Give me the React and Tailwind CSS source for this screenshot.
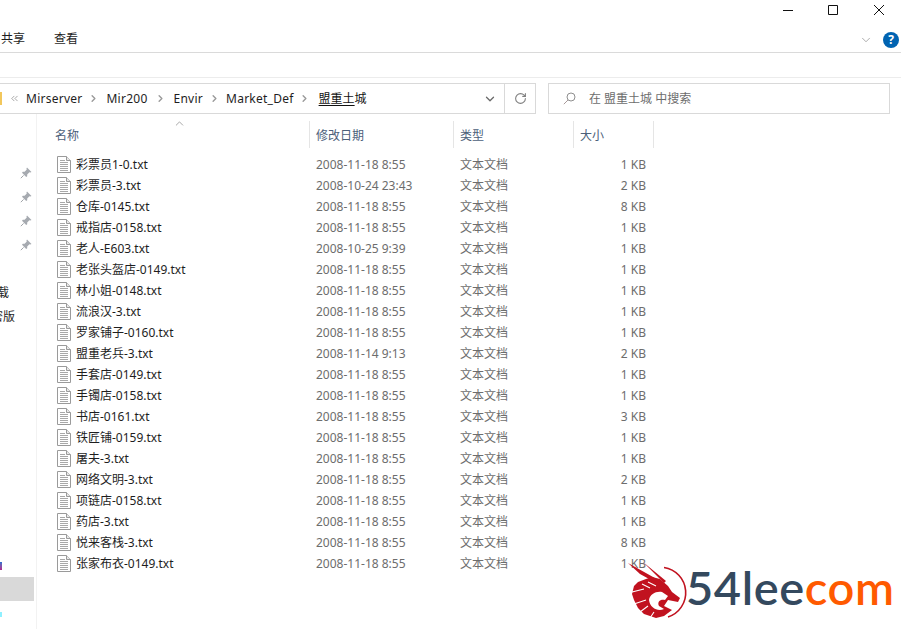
import { ChevronDown, ChevronUp, ChevronRight, ChevronsLeft, RotateCw } from 'lucide-react';

const files = [
  ['彩票员1-0.txt', '2008-11-18 8:55', '1 KB'],
  ['彩票员-3.txt', '2008-10-24 23:43', '2 KB'],
  ['仓库-0145.txt', '2008-11-18 8:55', '8 KB'],
  ['戒指店-0158.txt', '2008-11-18 8:55', '1 KB'],
  ['老人-E603.txt', '2008-10-25 9:39', '1 KB'],
  ['老张头盔店-0149.txt', '2008-11-18 8:55', '1 KB'],
  ['林小姐-0148.txt', '2008-11-18 8:55', '1 KB'],
  ['流浪汉-3.txt', '2008-11-18 8:55', '1 KB'],
  ['罗家铺子-0160.txt', '2008-11-18 8:55', '1 KB'],
  ['盟重老兵-3.txt', '2008-11-14 9:13', '2 KB'],
  ['手套店-0149.txt', '2008-11-18 8:55', '1 KB'],
  ['手镯店-0158.txt', '2008-11-18 8:55', '1 KB'],
  ['书店-0161.txt', '2008-11-18 8:55', '3 KB'],
  ['铁匠铺-0159.txt', '2008-11-18 8:55', '1 KB'],
  ['屠夫-3.txt', '2008-11-18 8:55', '1 KB'],
  ['网络文明-3.txt', '2008-11-18 8:55', '2 KB'],
  ['项链店-0158.txt', '2008-11-18 8:55', '1 KB'],
  ['药店-3.txt', '2008-11-18 8:55', '1 KB'],
  ['悦来客栈-3.txt', '2008-11-18 8:55', '8 KB'],
  ['张家布衣-0149.txt', '2008-11-18 8:55', '1 KB'],
];

function FileIcon() {
  return (
    <svg width="14" height="17" viewBox="0 0 14 17" className="shrink-0">
      <path d="M0.5 0.5H9.5L13.5 4.5V16.5H0.5Z" fill="#fff" stroke="#9a9a9a" />
      <path d="M9.5 0.5V4.5H13.5" fill="#e8e8e8" stroke="#9a9a9a" />
      <path d="M3 4.5H8M3 6.5H11M3 8.5H11M3 10.5H11M3 12.5H11M3 14.5H11" stroke="#a8a8a8" />
    </svg>
  );
}

function Pin() {
  return (
    <svg width="12" height="12" viewBox="0 0 12 12">
      <path d="M7 0.5L11.5 5L10.3 5.6L9.4 5.2L7.2 7.4L7.2 9.2L6.2 10L2 5.8L2.8 4.8L4.6 4.8L6.8 2.6L6.4 1.7Z" fill="#a6aab0" />
      <path d="M3.6 8.4L0.8 11.2" stroke="#a0a4a8" />
    </svg>
  );
}

function Crumb() {
  return <ChevronRight size={11} strokeWidth={3} className="text-[#9a9a9a] shrink-0" />;
}

function HeaderCell({ w, pl, children }) {
  return (
    <div className={`${w} ${pl} h-[27px] pt-[2px] border-r border-[#e5e5e5] flex items-center text-[#4c607a]`}>
      {children}
    </div>
  );
}

function Logo() {
  return (
    <div className="absolute left-[628px] top-[560px] w-[270px] h-[62px] flex items-start">
      <svg width="60" height="60" viewBox="628 560 60 60" className="shrink-0">
        <path d="M664 567.5A25.5 25.5 0 0 1 668 617" fill="none" stroke="#c1121f" strokeWidth="1.6" />
        <path d="M628 563L662 582L660 585L640 574ZM643 562L666 581L664 583Z" fill="#c1121f" />
        <path d="M634 586L638 582L646 579L652 577L660 579L668 586L672 592L680 598L678 602L668 600L664 606L672 610L664 616L656 618L650 616L644 614L638 608L634 600L632 594Z" fill="#c1121f" />
        <path d="M649 600C650 594 656 591 662 592L668 596L665 600C660 599 657 602 659 606L664 609C658 612 650 608 649 600Z" fill="#fff" />
        <path d="M632 592L644 589M634 604L646 600M640 612L648 606M648 582L656 586M642 584L650 588M654 612L650 618" stroke="#fff" strokeWidth="1.1" />
      </svg>
      <div className="ml-[-2px] mt-[-3px] text-[47px] leading-[60px] font-semibold font-['Lato',sans-serif] tracking-[0.6px] whitespace-nowrap">
        <span className="text-[#34495e]">54lee</span>
        <span className="text-[#ff5a00]">com</span>
      </div>
    </div>
  );
}

export default function App() {
  return (
    <div className="relative w-[901px] h-[629px] bg-white overflow-hidden flex flex-col text-[12px] text-[#1e1e1e] font-['Noto_Sans','Noto_Sans_CJK_SC',sans-serif]">
      <div className="h-[27px] flex justify-end items-start">
        <svg width="118" height="20" viewBox="783 0 118 20" className="shrink-0">
          <path d="M783 10.5H793" stroke="#111" />
          <path d="M828.5 5.5H837.5V14.5H828.5Z" fill="none" stroke="#111" />
          <path d="M874 5L884 15M884 5L874 15" stroke="#111" />
        </svg>
      </div>

      <div className="h-[26px] border-b border-[#dadada] flex items-center relative">
        <span className="ml-[1px] pb-[1px]">共享</span>
        <span className="ml-[29px] pb-[1px]">查看</span>
        <ChevronDown size={14} strokeWidth={1.2} className="ml-auto text-[#8a8a8a] mr-[10px]" />
        <div className="w-[16px] h-[16px] rounded-full bg-[#0063b1] text-white text-[12px] font-bold flex items-center justify-center mr-[2px]">?</div>
      </div>

      <div className="h-[25px] border-b border-[#ececec] shrink-0" />

      <div className="h-[36px] pt-[5px] flex items-start shrink-0">
        <div className="w-[536px] h-[31px] border border-l-0 border-[#d9d9d9] flex items-center tracking-[0.25px]">
          <div className="w-[2px] h-[13px] bg-[#f2c75c] shrink-0" />
          <ChevronsLeft size={11} strokeWidth={1.6} className="text-[#8a8a8a] ml-[7px] shrink-0" />
          <span className="ml-[6px]">Mirserver</span>
          <span className="ml-[6px]"><Crumb /></span>
          <span className="ml-[7px]">Mir200</span>
          <span className="ml-[7px]"><Crumb /></span>
          <span className="ml-[8px]">Envir</span>
          <span className="ml-[6px]"><Crumb /></span>
          <span className="ml-[6px]">Market_Def</span>
          <span className="ml-[5px]"><Crumb /></span>
          <span className="ml-[9px] text-[#111] tracking-normal"><span className="underline underline-offset-2">盟重土</span>城</span>
          <ChevronDown size={14} strokeWidth={2.2} className="ml-auto mr-[7px] text-[#6a6a6a]" />
          <div className="w-[31px] h-full border-l border-[#d9d9d9] flex items-center justify-center">
            <RotateCw size={13} strokeWidth={2} className="text-[#808080]" />
          </div>
        </div>
        <div className="ml-[12px] w-[342px] h-[31px] border border-[#d9d9d9] flex items-center text-[#6d6d6d]">
          <svg width="13" height="13" viewBox="0 0 13 13" className="ml-[14px] shrink-0">
            <circle cx="8" cy="5" r="4" fill="none" stroke="#8f8f8f" />
            <path d="M5 8L0.8 12.2" stroke="#a89a9a" />
          </svg>
          <span className="ml-[13px]">在 盟重土城 中搜索</span>
        </div>
      </div>

      <div className="flex-1 flex min-h-0">
        <div className="w-[37px] shrink-0 border-r border-[#f2f2f2] flex flex-col overflow-hidden">
          <div className="h-[47px] shrink-0" />
          {[0, 1, 2, 3].map((i) => (
            <div key={i} className="h-[24px] flex items-center justify-end pr-[4px] shrink-0"><Pin /></div>
          ))}
          <div className="h-[23px] shrink-0" />
          <div className="h-[24px] pt-[1px] flex items-center shrink-0 whitespace-nowrap"><span className="ml-[-15px]">下载</span></div>
          <div className="h-[24px] pt-[2px] flex items-center shrink-0 whitespace-nowrap"><span className="ml-[-9px]">密版</span></div>
          <div className="h-[249px] shrink-0 flex flex-col justify-end">
            <div className="w-[2px] h-[8px] mb-[7px] bg-gradient-to-b from-[#1e6fd0] to-[#b0208a]" />
          </div>
          <div className="h-[24px] w-[34px] bg-[#d9d9d9] shrink-0" />
          <div className="w-[2px] h-[5px] mt-[11px] bg-[#8ff0ff] shrink-0" />
        </div>

        <div className="flex-1 min-w-0 flex flex-col">
          <div className="relative mt-[7px] flex">
            <ChevronUp size={13} strokeWidth={1.2} className="absolute left-[136px] top-[-4px] text-[#7a7a7a]" />
            <HeaderCell w="w-[273px]" pl="pl-[18px]">名称</HeaderCell>
            <HeaderCell w="w-[144px]" pl="pl-[6px]">修改日期</HeaderCell>
            <HeaderCell w="w-[120px]" pl="pl-[6px]">类型</HeaderCell>
            <HeaderCell w="w-[80px]" pl="pl-[6px]">大小</HeaderCell>
          </div>
          <div className="mt-[6px]">
            {files.map(([name, date, size]) => (
              <div key={name} className="h-[21px] flex items-center">
                <div className="w-[273px] pl-[20px] flex items-center">
                  <FileIcon />
                  <span className="ml-[5px]">{name}</span>
                </div>
                <div className="w-[144px] pl-[6px] text-[#6d6d6d]">{date}</div>
                <div className="w-[120px] pl-[6px] text-[#6d6d6d]">文本文档</div>
                <div className="w-[72px] text-right text-[#6d6d6d]">{size}</div>
              </div>
            ))}
          </div>
        </div>
      </div>

      <Logo />
    </div>
  );
}
